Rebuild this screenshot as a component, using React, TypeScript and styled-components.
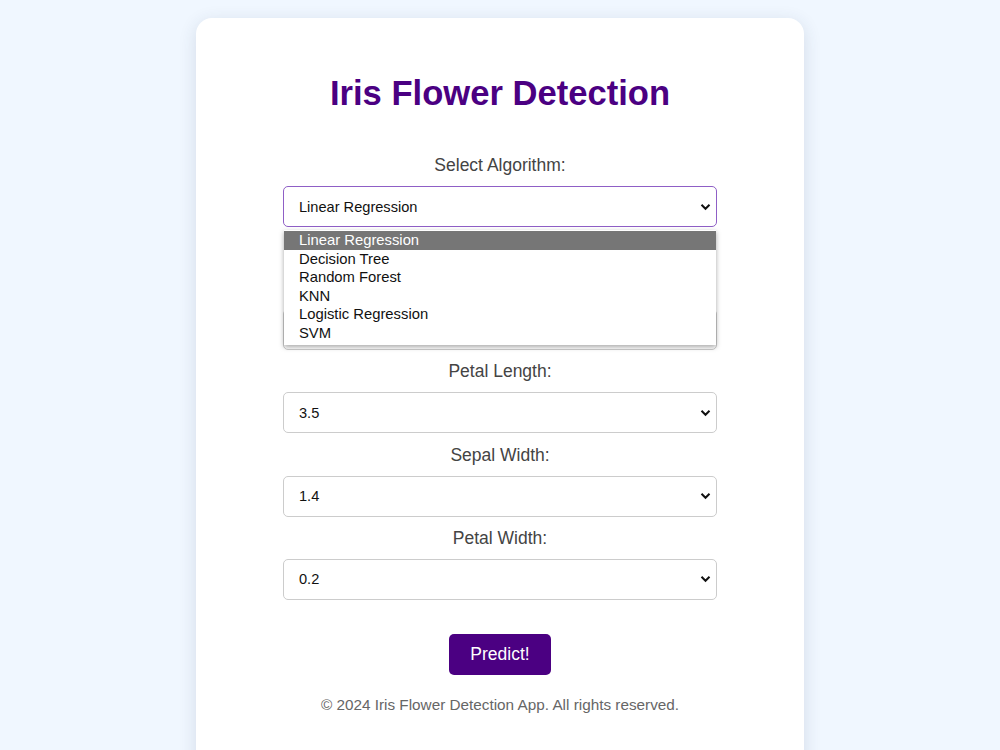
import React from "react";
import styled, { createGlobalStyle } from "styled-components";

const GlobalStyle = createGlobalStyle`
  html, body {
    margin: 0;
    padding: 0;
    background: #f0f7ff;
    font-family: "Liberation Sans", Arial, sans-serif;
  }
  body {
    height: 750px;
    overflow: hidden;
  }
`;

const Page = styled.div`
  display: flex;
  justify-content: center;
  padding-top: 18px;
`;

const Card = styled.div`
  width: 608px;
  min-height: 760px;
  box-sizing: border-box;
  background: #ffffff;
  border-radius: 16px;
  box-shadow: 0 4px 18px rgba(40, 60, 90, 0.14);
  padding: 55px 0 40px;
  display: flex;
  flex-direction: column;
  align-items: center;
`;

const Title = styled.h1`
  margin: 0 0 40px;
  font-size: 34.6px;
  line-height: 41px;
  font-weight: 700;
  color: #4b0082;
  text-align: center;
`;

const Form = styled.form`
  width: 434px;
  display: flex;
  flex-direction: column;
  align-items: stretch;
`;

const Field = styled.div<{ $spaced?: boolean }>`
  position: relative;
  display: flex;
  flex-direction: column;
  margin-bottom: ${(p) => (p.$spaced ? "50px" : "10.3px")};
`;

const Label = styled.label`
  display: block;
  text-align: center;
  font-size: 17.5px;
  line-height: 22px;
  color: #444444;
  margin-bottom: 10px;
`;

const SelectBox = styled.div<{ $focused?: boolean }>`
  position: relative;
  height: 41px;
  box-sizing: border-box;
  border: 1px solid ${(p) => (p.$focused ? "#8f5fc6" : "#cccccc")};
  border-radius: 5px;
  background: #ffffff;
  display: flex;
  align-items: center;
  padding: 0 15px;
  font-size: 14.6px;
  color: #111111;
`;

const Chevron = styled.svg`
  position: absolute;
  right: 5px;
  top: 50%;
  margin-top: -4px;
  width: 11px;
  height: 8px;
`;

const ListBox = styled.ul`
  position: absolute;
  top: calc(100% + 3px);
  left: 1px;
  right: 1px;
  margin: 0;
  padding: 1px 0 2px;
  list-style: none;
  background: #ffffff;
  box-shadow: 0 2px 5px rgba(0, 0, 0, 0.35);
  z-index: 5;
`;

const Option = styled.li<{ $active?: boolean }>`
  height: 18.6px;
  line-height: 18.6px;
  padding: 0 15px;
  font-size: 14.8px;
  color: ${(p) => (p.$active ? "#ffffff" : "#111111")};
  background: ${(p) => (p.$active ? "#767676" : "transparent")};
  white-space: nowrap;
`;

const Button = styled.button`
  align-self: center;
  margin-top: 24px;
  width: 102px;
  height: 41px;
  border: none;
  border-radius: 5px;
  background: #4b0082;
  color: #ffffff;
  font-family: "Liberation Sans", Arial, sans-serif;
  font-size: 17.5px;
  cursor: pointer;
`;

const Footer = styled.p`
  margin: 21px 0 0;
  font-size: 15.3px;
  line-height: 18px;
  color: #666666;
  text-align: center;
`;

const ChevronIcon = () => (
  <Chevron viewBox="0 0 11 8">
    <path d="M1.5 1.8 L5.5 5.8 L9.5 1.8" fill="none" stroke="#111" strokeWidth="2" />
  </Chevron>
);

const algorithms = [
  "Linear Regression",
  "Decision Tree",
  "Random Forest",
  "KNN",
  "Logistic Regression",
  "SVM",
];

const fields = [
  { label: "Sepal Length:", value: "5.1" },
  { label: "Petal Length:", value: "3.5" },
  { label: "Sepal Width:", value: "1.4" },
  { label: "Petal Width:", value: "0.2" },
];

export default function App() {
  return (
    <>
      <GlobalStyle />
      <Page>
        <Card>
          <Title>Iris Flower Detection</Title>
          <Form onSubmit={(e) => e.preventDefault()}>
            <Field $spaced>
              <Label>Select Algorithm:</Label>
              <SelectBox $focused>
                Linear Regression
                <ChevronIcon />
              </SelectBox>
              <ListBox>
                {algorithms.map((a, i) => (
                  <Option key={a} $active={i === 0}>
                    {a}
                  </Option>
                ))}
              </ListBox>
            </Field>
            {fields.map((f) => (
              <Field key={f.label}>
                <Label>{f.label}</Label>
                <SelectBox>
                  {f.value}
                  <ChevronIcon />
                </SelectBox>
              </Field>
            ))}
            <Button type="submit">Predict!</Button>
          </Form>
          <Footer>© 2024 Iris Flower Detection App. All rights reserved.</Footer>
        </Card>
      </Page>
    </>
  );
}
